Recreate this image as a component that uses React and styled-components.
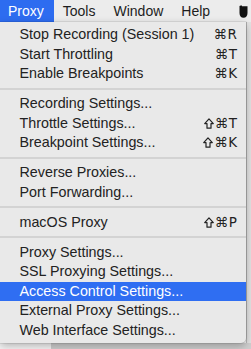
import React from 'react';
import styled, { createGlobalStyle } from 'styled-components';

const GlobalStyle = createGlobalStyle`
  html, body {
    margin: 0;
    padding: 0;
    background: #f4f4f4;
  }
  body {
    font-family: "Liberation Sans", "DejaVu Sans", sans-serif;
    -webkit-font-smoothing: antialiased;
  }
`;

const Screen = styled.div`
  width: 251px;
  height: 349px;
  overflow: hidden;
  display: flex;
  flex-direction: column;
  background: #f4f4f4;
`;

const MenuBar = styled.div`
  display: flex;
  align-items: stretch;
  height: 22px;
  background: #ececec;
  flex-shrink: 0;
`;

const BarItem = styled.div`
  display: flex;
  align-items: center;
  padding: ${(p) => (p.$active ? '0 10px 0 8px' : '0 9px')};
  font-size: 14px;
  color: ${(p) => (p.$active ? '#fff' : '#1d1d1d')};
  background: ${(p) => (p.$active ? '#2d6cf0' : 'transparent')};
`;

const BarIcon = styled.div`
  margin-left: auto;
  width: 12px;
  display: flex;
  align-items: center;
`;

const Stage = styled.div`
  position: relative;
  flex: 1;
  display: flex;
  flex-direction: column;
`;

// fond derrière le menu: une bande à droite et une bande en bas
const Backdrop = styled.div`
  flex: 1;
  display: flex;
  justify-content: flex-end;
`;

const RightStrip = styled.div`
  width: 4px;
  background: #e2e2e2;
  border-left: 1px solid #b9b9b9;
`;

const BottomStrip = styled.div`
  height: 6px;
  display: flex;
`;

const BottomLeft = styled.div`
  width: 51px;
  background: #f6f6f6;
`;

const BottomRight = styled.div`
  flex: 1;
  background: #cfcfcf;
`;

const Menu = styled.div`
  position: absolute;
  top: 0;
  left: 0;
  width: 246px;
  height: 321px;
  box-sizing: border-box;
  padding: 3px 0 3.5px;
  background: #e9e9e9;
  border-radius: 0 0 5px 0;
  box-shadow: 0 3px 9px rgba(0, 0, 0, 0.28), 0 0 0 0.5px rgba(0, 0, 0, 0.15);
`;

const Row = styled.div`
  display: flex;
  align-items: center;
  justify-content: space-between;
  height: 19.5px;
  line-height: 19.5px;
  padding: 0 8.5px 0 19.5px;
  font-size: 14.3px;
  color: ${(p) => (p.$selected ? '#fff' : '#222')};
  background: ${(p) => (p.$selected ? '#2f6ef2' : 'transparent')};
  white-space: nowrap;
`;

const Shortcut = styled.span`
  display: flex;
  align-items: center;
  gap: 1px;
  font-family: "DejaVu Sans", sans-serif;
  font-size: 13.5px;
  letter-spacing: 0.5px;
`;

const Separator = styled.div`
  height: 10.5px;
  display: flex;
  align-items: center;

  &::after {
    content: '';
    flex: 1;
    height: 2px;
    background: #d3d3d3;
  }
`;

const groups = [
  [
    ['Stop Recording (Session 1)', '⌘R'],
    ['Start Throttling', '⌘T'],
    ['Enable Breakpoints', '⌘K'],
  ],
  [
    ['Recording Settings...'],
    ['Throttle Settings...', '⌘T', true],
    ['Breakpoint Settings...', '⌘K', true],
  ],
  [['Reverse Proxies...'], ['Port Forwarding...']],
  [['macOS Proxy', '⌘P', true]],
  [
    ['Proxy Settings...'],
    ['SSL Proxying Settings...'],
    ['Access Control Settings...'],
    ['External Proxy Settings...'],
    ['Web Interface Settings...'],
  ],
];

function ShiftIcon() {
  return (
    <svg width="10" height="11" viewBox="0 0 10 11">
      <path
        d="M5 0.9 L9.3 5.6 H7 V10.2 H3 V5.6 H0.7 Z"
        fill="none"
        stroke="currentColor"
        strokeWidth="1.2"
        strokeLinejoin="round"
      />
    </svg>
  );
}

function JugIcon() {
  return (
    <svg width="9" height="13" viewBox="0 0 9 13">
      <path
        d="M0.5 1 L2.5 0.3 L3 1.2 L8.5 1.2 L8.5 8 C8.5 11 7 12.7 4.5 12.7 C2 12.7 0.5 11 0.5 8 Z"
        fill="#111"
      />
    </svg>
  );
}

export default function App() {
  return (
    <>
      <GlobalStyle />
      <Screen>
        <MenuBar>
          <BarItem $active>Proxy</BarItem>
          <BarItem>Tools</BarItem>
          <BarItem>Window</BarItem>
          <BarItem>Help</BarItem>
          <BarIcon>
            <JugIcon />
          </BarIcon>
        </MenuBar>
        <Stage>
          <Backdrop>
            <RightStrip />
          </Backdrop>
          <BottomStrip>
            <BottomLeft />
            <BottomRight />
          </BottomStrip>
          <Menu>
            {groups.map((group, gi) => (
              <React.Fragment key={gi}>
                {gi > 0 && <Separator />}
                {group.map(([label, keys, shift]) => (
                  <Row key={label} $selected={label === 'Access Control Settings...'}>
                    <span>{label}</span>
                    {keys && (
                      <Shortcut>
                        {shift && <ShiftIcon />}
                        {keys}
                      </Shortcut>
                    )}
                  </Row>
                ))}
              </React.Fragment>
            ))}
          </Menu>
        </Stage>
      </Screen>
    </>
  );
}
